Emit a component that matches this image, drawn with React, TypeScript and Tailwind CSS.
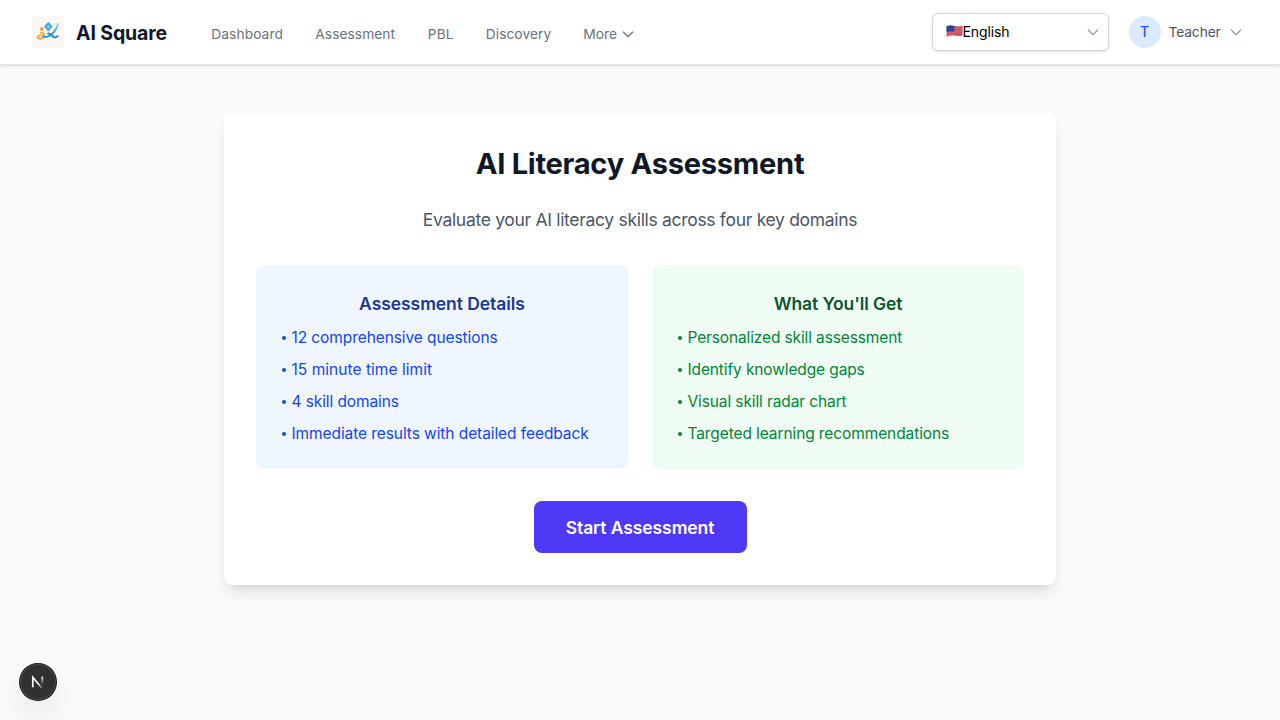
import React from "react";

type PanelProps = { title: string; items: { text: string; cls: string }[]; box: string; heading: string; list: string };

function Chevron({ className }: { className: string }) {
  return (
    <svg className={className} viewBox="0 0 24 24" fill="none" stroke="currentColor" strokeWidth="2" strokeLinecap="round" strokeLinejoin="round">
      <path d="M19 9l-7 7-7-7" />
    </svg>
  );
}

function Logo() {
  return (
    <svg className="h-8 w-8 shrink-0" viewBox="0 0 32 32" fill="none">
      <defs>
        <linearGradient id="ribbon" x1="12" y1="20" x2="26" y2="8" gradientUnits="userSpaceOnUse">
          <stop offset="0" stopColor="#2f86cc" />
          <stop offset="0.6" stopColor="#3d9fd6" />
          <stop offset="1" stopColor="#9ad3ea" />
        </linearGradient>
        <linearGradient id="loop" x1="5" y1="0" x2="17" y2="0" gradientUnits="userSpaceOnUse">
          <stop offset="0" stopColor="#f7a41f" />
          <stop offset="0.6" stopColor="#f5ad45" />
          <stop offset="1" stopColor="#7fb2cc" />
        </linearGradient>
      </defs>
      <rect width="32" height="32" fill="#fbf7f2" />
      <path d="M16.300 5.800l4.300 4.800-4.300 5.200-4.300-5.200z" fill="#45aed6" />
      <path d="M16.300 9.200l1.300 1.500-1.300 1.500-1.300-1.500z" fill="#a9deec" />
      <path d="M20.500 9c2-1.300 4-1.700 5.700-1.200" stroke="#b9dfeb" strokeWidth=".8" strokeLinecap="round" />
      <circle cx="9.800" cy="13" r="2" fill="#f4a54a" />
      <path d="M9 16.800c2.300-.3 3.600 1 3.100 2.800-.6 2-2.700 3.300-4.800 3.100-1.600-.2-2-1.600-1-2.600 1.100-1 3-.9 4.700-.5" stroke="url(#loop)" strokeWidth="1.800" strokeLinecap="round" />
      <path d="M11.500 20.600c2 .5 4 .3 5.800-.6 2.100-1.100 3.700-2.800 5-4.500 1.800-2.300 3.400-4.800 3.700-7.300" stroke="url(#ribbon)" strokeWidth="1.900" strokeLinecap="round" />
      <path d="M16 17.600c3.300-.6 3.900 3.300 6.500 3.800 1.300.2 2.400-.4 3.100-1.300" stroke="#3489cc" strokeWidth="1.900" strokeLinecap="round" />
    </svg>
  );
}

function Flag() {
  return (
    <svg className="mb-[2px] h-[13px] w-[17px] shrink-0" viewBox="0 0 17 13">
      <defs>
        <clipPath id="wave"><path d="M.6 1.300C3 0 5.500.3 8.500 1s5.500.6 8-.2v9.800c-2.500.9-5 .8-8 .2s-5.500-.3-7.900.9z" /></clipPath>
      </defs>
      <g clipPath="url(#wave)">
        <rect width="17" height="13" fill="#cf4354" />
        <path d="M0 3.500C4 1.500 6 2.500 9 3.200s5.500.5 8 0M0 5.800c4-1.500 6-1 9-.2s5.500.5 8 0M0 8c4-1.300 6-1 9-.2s5.500.5 8 0M0 10.200c4-1.300 6-1 9-.2s5.500.5 8 0" stroke="#e58d96" strokeWidth=".6" fill="none" />
        <path d="M0 0h8.200v6.600C5.500 6 3 6 0 7z" fill="#1f4396" />
        <path d="M1.500 3h6M1.500 5h6" stroke="#5f78b8" strokeWidth=".5" strokeDasharray=".7 .9" />
      </g>
    </svg>
  );
}

function Panel({ title, items, box, heading, list }: PanelProps) {
  return (
    <section className={"rounded-lg p-6 pb-[23px] " + box}>
      <h3 className={"mb-2 pt-px text-center text-[17.500px] leading-7 font-semibold " + heading}>{title}</h3>
      <ul className={"space-y-2 text-[15.500px] leading-6 " + list}>
        {items.map((item) => (
          <li key={item.text} className="flex whitespace-nowrap">
            <span className="flex w-[11.500px] shrink-0 items-center pl-[2.200px]">
              <span className="h-[3.600px] w-[3.600px] rounded-full bg-current" />
            </span>
            <span className={item.cls}>{item.text}</span>
          </li>
        ))}
      </ul>
    </section>
  );
}

const nav = [
  { label: "Dashboard", cls: "w-[72px] tracking-[0.080px]" },
  { label: "Assessment", cls: "w-[80.500px] tracking-[0.050px]" },
  { label: "PBL", cls: "w-[26px] tracking-[0.050px]" },
  { label: "Discovery", cls: "w-[65.500px] tracking-[0.050px]" },
];

export default function App() {
  return (
    <div className="flex min-h-screen flex-col bg-gray-50 font-['Inter','Liberation_Sans',sans-serif]">
      <header className="flex h-[65px] items-center justify-between border-b border-gray-200 bg-white pl-8 pr-9 shadow-sm">
        <div className="flex items-center">
          <Logo />
          <span className="ml-3 w-[91px] whitespace-nowrap pt-[2px] text-[19.500px] leading-7 font-bold tracking-[-0.130px] text-gray-900">AI Square</span>
          <nav className="ml-[44.300px] flex items-center gap-8 pt-[3px] text-[13.750px] leading-5 text-gray-500">
            {nav.map((n) => (
              <a key={n.label} className={"whitespace-nowrap " + n.cls}>{n.label}</a>
            ))}
            <button className="flex items-center gap-1">
              <span className="w-[33px] text-left tracking-[0.050px]">More</span>
              <Chevron className="h-4 w-4" />
            </button>
          </nav>
        </div>
        <div className="flex items-center">
          <button className="flex h-[38px] w-[177px] items-center rounded-md border border-gray-300 bg-white pl-[13px] pr-[7px] text-sm text-black shadow-sm">
            <Flag />
            <span className="tracking-[-0.100px]">English</span>
            <Chevron className="ml-auto h-4 w-4 text-gray-400" />
          </button>
          <span className="ml-5 flex h-8 w-8 items-center justify-center rounded-full bg-blue-100 text-sm font-medium text-blue-600">T</span>
          <span className="ml-2 w-[51.500px] whitespace-nowrap text-[13.750px] leading-5 tracking-[-0.100px] text-gray-600">Teacher</span>
          <Chevron className="ml-2 h-4 w-4 text-gray-400" />
        </div>
      </header>

      <main className="mx-auto mt-12 w-[832px] rounded-lg bg-white p-8 text-center shadow-lg">
        <h1 className="mb-[23px] pt-px text-[29.100px] leading-9 font-bold tracking-[-0.280px] text-gray-900">AI Literacy Assessment</h1>
        <p className="mb-[31px] pt-px text-[17.500px] leading-7 tracking-[-0.310px] text-gray-600">Evaluate your AI literacy skills across four key domains</p>
        <div className="grid grid-cols-2 gap-6">
          <Panel
            title="Assessment Details"
            box="bg-blue-50"
            heading="text-blue-900 tracking-[-0.060px]"
            list="text-blue-700"
            items={[
              { text: "12 comprehensive questions", cls: "tracking-[-0.090px]" },
              { text: "15 minute time limit", cls: "tracking-[0.040px]" },
              { text: "4 skill domains", cls: "tracking-[-0.100px]" },
              { text: "Immediate results with detailed feedback", cls: "tracking-[-0.080px]" },
            ]}
          />
          <Panel
            title="What You'll Get"
            box="bg-green-50"
            heading="text-green-900 tracking-[-0.120px]"
            list="text-green-700"
            items={[
              { text: "Personalized skill assessment", cls: "tracking-[-0.130px]" },
              { text: "Identify knowledge gaps", cls: "tracking-[-0.120px]" },
              { text: "Visual skill radar chart", cls: "tracking-[-0.110px]" },
              { text: "Targeted learning recommendations", cls: "tracking-[-0.100px]" },
            ]}
          />
        </div>
        <button className="mt-8 inline-flex h-[52px] w-[213px] items-center justify-center whitespace-nowrap rounded-lg bg-indigo-600 pt-px align-top text-[17.500px] leading-7 font-semibold tracking-[-0.080px] text-white">
          Start Assessment
        </button>
      </main>

      <button className="fixed bottom-5 left-5 flex h-9 w-9 items-center justify-center rounded-full bg-[#303030] shadow-[0_0_0_1px_#171717,inset_0_0_0_1px_rgba(255,255,255,0.14),0_16px_32px_-8px_rgba(0,0,0,0.24)]">
        <svg className="h-4 w-4" viewBox="0 0 16 16" fill="none" strokeWidth="1.700">
          <defs>
            <linearGradient id="diag" x1="9" y1="9" x2="13.500" y2="14.500" gradientUnits="userSpaceOnUse">
              <stop stopColor="#fff" />
              <stop offset="1" stopColor="#fff" stopOpacity="0" />
            </linearGradient>
            <linearGradient id="stem" x1="0" y1="2.500" x2="0" y2="11" gradientUnits="userSpaceOnUse">
              <stop stopColor="#fff" />
              <stop offset="1" stopColor="#fff" stopOpacity="0" />
            </linearGradient>
          </defs>
          <path d="M2.800 13.300V3.300l9.200 11" stroke="url(#diag)" />
          <path d="M12.300 2.600v8.500" stroke="url(#stem)" />
        </svg>
      </button>
    </div>
  );
}
